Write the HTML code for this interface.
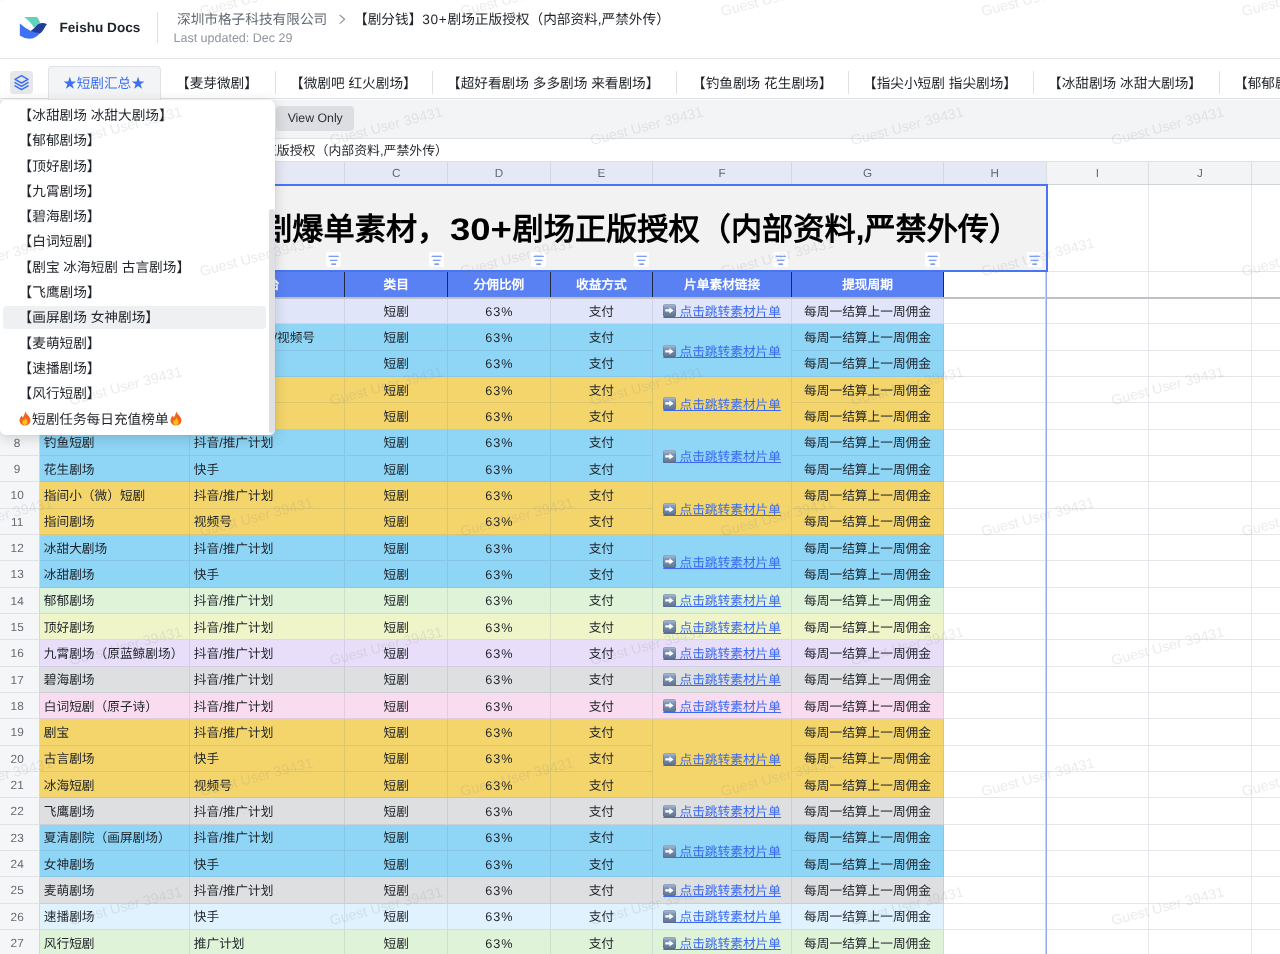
<!DOCTYPE html>
<html lang="zh-CN"><head><meta charset="utf-8"><title>Feishu Docs</title>
<style>
*{box-sizing:border-box;margin:0;padding:0}
html,body{width:1280px;height:954px;overflow:hidden;background:#fff}
body{font-family:"Liberation Sans",sans-serif;color:#1f2329;position:relative;-webkit-font-smoothing:antialiased;text-rendering:geometricPrecision}
.abs{position:absolute}
.nw{white-space:nowrap}
/* header */
#hdr{left:0;top:0;width:1280px;height:58.6px;background:#fff;border-bottom:1.5px solid #e4e5e7}
#brand{left:59.5px;top:19px;font-weight:700;font-size:13.6px;line-height:18px;color:#1f2329;letter-spacing:0}
#vdiv{left:157px;top:12px;width:1px;height:31px;background:#dee0e3}
#crumb1{left:177px;top:9.5px;font-size:13.67px;line-height:20px;color:#646a73}
#crumbgt{left:338.5px;top:9.5px;font-size:13px;line-height:20px;color:#8f959e}
#crumb2{left:354px;top:9.5px;font-size:13.67px;line-height:20px;color:#1f2329}
#upd{left:173.5px;top:31px;font-size:12.5px;line-height:15px;color:#8f959e;letter-spacing:0}
/* tabs */
#tabs{left:0;top:59px;width:1280px;height:40px;background:#fff;border-bottom:1px solid #dee0e3}
#layer{left:9.6px;top:71px;width:23.4px;height:23px;border-radius:4px;background:#e6e7e9}
#tabA{left:48px;top:66px;width:113px;height:33.5px;background:#f3f4f6;border:1px solid #e0e2e5;border-bottom:none;border-radius:4px 4px 0 0}
.tab{top:73px;font-size:13.67px;line-height:22px;color:#1f2329}
.tsep{top:71px;width:1px;height:23px;background:#dee0e3}
/* toolbar */
#tool{left:0;top:99.5px;width:1280px;height:39px;background:#f3f4f6;border-bottom:1px solid #dee0e3}
#vo{left:276px;top:106.4px;width:78.4px;height:25px;border-radius:4px;background:#dcdee1;font-size:12.3px;line-height:25.6px;text-align:center;color:#2b2f36}
#fx{left:0;top:138.5px;width:1280px;height:24px;background:#fff;border-bottom:1px solid #dee0e3}
#fxt{right:832px;top:141.7px;font-size:12.9px;line-height:18px;color:#1f2329}
/* col header */
.ch{top:162.5px;height:21.5px;background:#f3f4f6;border-right:1px solid #dcdee2;border-bottom:1px solid #d0d3d6;font-size:11.7px;line-height:21px;text-align:center;color:#646a73}
.ch.sel{background:#e2e7f5;border-right-color:#ced5e8;border-bottom:none}
/* rows */
.rn{left:0;width:39.9px;background:#f5f6f8;border-right:1px solid #d5d7db;border-bottom:1px solid #e0e2e5;font-size:11.8px;color:#646a73;text-align:center;padding-right:4.6px;padding-top:.1px;overflow:hidden}
.c{font-size:12.7px;color:#1f2329;border-right:1px solid rgba(90,105,125,.14);border-bottom:1px solid rgba(90,105,125,.14);overflow:hidden}
.c.l{padding-left:3.9px;text-align:left}
.c.m{text-align:center}
.h2{background:#5a81f3;color:#fff;font-weight:700;font-size:12.7px;text-align:center;border-right:1.5px solid #1f2a44;border-bottom:none}
.lk{color:#3b6af0;text-decoration:underline;text-decoration-thickness:.85px;text-underline-offset:.9px;text-decoration-skip-ink:none}
.ew{position:relative}
.em{position:absolute;left:.2px;top:-.2px;width:12.5px;height:12.5px;border-radius:2.6px;background:linear-gradient(#aebfd6,#7c92b0 35%,#5f7492);box-shadow:inset 0 0 0 .5px rgba(60,80,110,.35)}
.gl{background:#e5e6e9}
.wm{font-size:17px;color:#000;opacity:.07;transform:rotate(-15deg);transform-origin:left top;white-space:nowrap;pointer-events:none;letter-spacing:.2px}
/* dropdown */
#dd{left:0;top:99.5px;width:275.4px;height:335.5px;background:#fff;border-radius:5px;box-shadow:0 3px 14px rgba(31,35,41,.18),0 0 1px rgba(31,35,41,.25)}
.di{left:18.6px;font-size:13.67px;line-height:25.3px;height:25.3px;color:#1f2329}
#dhl{left:3px;top:305.7px;width:263px;height:23.8px;border-radius:4px;background:#eff0f1}
#dsb{left:269.2px;top:209px;width:5.8px;height:224px;border-radius:3px;background:#dfe0e3}
</style></head><body>
<div id="app" class="abs" style="left:0;top:0;width:1280px;height:954px;will-change:transform">

<div id="hdr" class="abs"></div>
<svg class="abs" style="left:10px;top:8px" width="48" height="40" viewBox="0 0 48 40">
<path d="M9.85 15.5 V27.5 Q14 30.6 19.3 30.8 Q23 30.9 26.5 28.6 Q30.5 26 33.5 21 Q35.2 17.8 36.9 16.35 L30 20 L20.96 23 Q14.7 19.9 9.85 15.5 Z" fill="#3f70f6"/>
<path d="M14.05 9 L26.4 9 Q27.3 9 27.8 9.9 Q29.4 12.4 30.2 14.7 Q26.8 17.2 24.1 20.1 Q20.5 13.3 14.05 9 Z" fill="#5fd3bb"/>
<path d="M20.96 22.85 Q24.5 20.5 27.25 16.8 Q29.5 15.3 31.9 15.1 Q34.8 14.9 36.9 16.35 Q35.3 18 34.4 20.1 Q32.8 23.2 30.6 24.95 Q26 25.4 20.96 22.85 Z" fill="#213c9b"/>
</svg>
<div id="brand" class="abs nw">Feishu Docs</div>
<div id="vdiv" class="abs"></div>
<div id="crumb1" class="abs nw">深圳市格子科技有限公司</div>
<svg class="abs" style="left:336px;top:12px" width="14" height="14" viewBox="0 0 14 14" fill="none" stroke="#8f959e" stroke-width="1.15" stroke-linecap="round" stroke-linejoin="round"><path d="M4 3.2 L8.6 7.3 L4 11.4"/></svg>
<div id="crumb2" class="abs nw">【剧分钱】<span style="letter-spacing:.7px">30+</span>剧场正版授权（内部资料,严禁外传）</div>
<div id="upd" class="abs nw">Last updated: Dec 29</div>
<div id="tabs" class="abs"></div>
<div id="layer" class="abs"><svg width="23" height="23" viewBox="0 0 23 23" fill="none" stroke="#3b6df2" stroke-width="1.5" stroke-linejoin="round" stroke-linecap="round"><path d="M11.5 4.6 L18 8.3 L11.5 12 L5 8.3 Z"/><path d="M5 11.6 L11.5 15.3 L18 11.6"/><path d="M5 14.9 L11.5 18.6 L18 14.9"/></svg></div>
<div id="tabA" class="abs"></div>
<div class="abs tab nw" style="left:63px;color:#3e6ff2">★短剧汇总★</div>
<div class="abs tab nw" style="left:176px">【麦芽微剧】</div>
<div class="abs tab nw" style="left:290px">【微剧吧 红火剧场】</div>
<div class="abs tab nw" style="left:447px">【超好看剧场 多多剧场 来看剧场】</div>
<div class="abs tab nw" style="left:692px">【钓鱼剧场 花生剧场】</div>
<div class="abs tab nw" style="left:863px">【指尖小短剧 指尖剧场】</div>
<div class="abs tab nw" style="left:1048px">【冰甜剧场 冰甜大剧场】</div>
<div class="abs tab nw" style="left:1234px">【郁郁剧场】</div>
<div class="abs tsep" style="left:274.5px"></div>
<div class="abs tsep" style="left:432px"></div>
<div class="abs tsep" style="left:676px"></div>
<div class="abs tsep" style="left:848px"></div>
<div class="abs tsep" style="left:1033px"></div>
<div class="abs tsep" style="left:1218.5px"></div>
<div id="tool" class="abs"></div>
<div id="vo" class="abs nw">View Only</div>
<div id="fx" class="abs"></div>
<div id="fxt" class="abs nw">【剧分钱】短剧爆单素材，30+剧场正版授权（内部资料,严禁外传）</div>
<div class="abs" style="left:0;top:161px;width:1280px;height:24.2px;background:#f3f4f6;border-top:1px solid #e1e3e6;border-bottom:1.2px solid #cfd2d6"></div>
<div class="abs" style="left:0;top:161px;width:1046.2px;height:23.2px;background:#e5e9f6;border-top:1px solid #dbe0ed"></div>
<div class="abs" style="left:39px;top:161px;width:1px;height:23.2px;background:#d3d7e3"></div>
<div class="abs nw" style="left:39.9px;top:162px;width:150px;height:22.2px;border-right:1px solid #d0d6e8;font-size:11.7px;line-height:24.2px;text-align:center;color:#646a73">A</div>
<div class="abs nw" style="left:189.9px;top:162px;width:155.2px;height:22.2px;border-right:1px solid #d0d6e8;font-size:11.7px;line-height:24.2px;text-align:center;color:#646a73">B</div>
<div class="abs nw" style="left:345.1px;top:162px;width:103.1px;height:22.2px;border-right:1px solid #d0d6e8;font-size:11.7px;line-height:24.2px;text-align:center;color:#646a73">C</div>
<div class="abs nw" style="left:448.2px;top:162px;width:102.5px;height:22.2px;border-right:1px solid #d0d6e8;font-size:11.7px;line-height:24.2px;text-align:center;color:#646a73">D</div>
<div class="abs nw" style="left:550.7px;top:162px;width:102.4px;height:22.2px;border-right:1px solid #d0d6e8;font-size:11.7px;line-height:24.2px;text-align:center;color:#646a73">E</div>
<div class="abs nw" style="left:653.1px;top:162px;width:139.1px;height:22.2px;border-right:1px solid #d0d6e8;font-size:11.7px;line-height:24.2px;text-align:center;color:#646a73">F</div>
<div class="abs nw" style="left:792.2px;top:162px;width:151.7px;height:22.2px;border-right:1px solid #d0d6e8;font-size:11.7px;line-height:24.2px;text-align:center;color:#646a73">G</div>
<div class="abs nw" style="left:943.9px;top:162px;width:102.8px;height:22.2px;border-right:1px solid #dcdee2;font-size:11.7px;line-height:24.2px;text-align:center;color:#646a73">H</div>
<div class="abs nw" style="left:1046.7px;top:162px;width:102.3px;height:22.2px;border-right:1px solid #dcdee2;font-size:11.7px;line-height:24.2px;text-align:center;color:#646a73">I</div>
<div class="abs nw" style="left:1149px;top:162px;width:102.8px;height:22.2px;border-right:1px solid #dcdee2;font-size:11.7px;line-height:24.2px;text-align:center;color:#646a73">J</div>
<div class="abs nw" style="left:1251.8px;top:162px;width:102.6px;height:22.2px;border-right:1px solid #dcdee2;font-size:11.7px;line-height:24.2px;text-align:center;color:#646a73">K</div>
<div class="abs rn" style="top:185px;height:86.52px;line-height:87.12px">1</div>
<div class="abs rn" style="top:271.52px;height:26.34px;line-height:26.94px">2</div>
<div class="abs rn" style="top:297.86px;height:26.34px;line-height:26.94px">3</div>
<div class="abs rn" style="top:324.2px;height:26.34px;line-height:26.94px">4</div>
<div class="abs rn" style="top:350.54px;height:26.34px;line-height:26.94px">5</div>
<div class="abs rn" style="top:376.88px;height:26.34px;line-height:26.94px">6</div>
<div class="abs rn" style="top:403.22px;height:26.34px;line-height:26.94px">7</div>
<div class="abs rn" style="top:429.56px;height:26.34px;line-height:26.94px">8</div>
<div class="abs rn" style="top:455.9px;height:26.34px;line-height:26.94px">9</div>
<div class="abs rn" style="top:482.24px;height:26.34px;line-height:26.94px">10</div>
<div class="abs rn" style="top:508.58px;height:26.34px;line-height:26.94px">11</div>
<div class="abs rn" style="top:534.92px;height:26.34px;line-height:26.94px">12</div>
<div class="abs rn" style="top:561.26px;height:26.34px;line-height:26.94px">13</div>
<div class="abs rn" style="top:587.6px;height:26.34px;line-height:26.94px">14</div>
<div class="abs rn" style="top:613.94px;height:26.34px;line-height:26.94px">15</div>
<div class="abs rn" style="top:640.28px;height:26.34px;line-height:26.94px">16</div>
<div class="abs rn" style="top:666.62px;height:26.34px;line-height:26.94px">17</div>
<div class="abs rn" style="top:692.96px;height:26.34px;line-height:26.94px">18</div>
<div class="abs rn" style="top:719.3px;height:26.34px;line-height:26.94px">19</div>
<div class="abs rn" style="top:745.64px;height:26.34px;line-height:26.94px">20</div>
<div class="abs rn" style="top:771.98px;height:26.34px;line-height:26.94px">21</div>
<div class="abs rn" style="top:798.32px;height:26.34px;line-height:26.94px">22</div>
<div class="abs rn" style="top:824.66px;height:26.34px;line-height:26.94px">23</div>
<div class="abs rn" style="top:851px;height:26.34px;line-height:26.94px">24</div>
<div class="abs rn" style="top:877.34px;height:26.34px;line-height:26.94px">25</div>
<div class="abs rn" style="top:903.68px;height:26.34px;line-height:26.94px">26</div>
<div class="abs rn" style="top:930.02px;height:26.34px;line-height:26.94px">27</div>
<div class="abs gl" style="left:943.9px;top:270.52px;width:336.1px;height:1px"></div>
<div class="abs gl" style="left:943.9px;top:296.86px;width:336.1px;height:1px"></div>
<div class="abs gl" style="left:943.9px;top:323.2px;width:336.1px;height:1px"></div>
<div class="abs gl" style="left:943.9px;top:349.54px;width:336.1px;height:1px"></div>
<div class="abs gl" style="left:943.9px;top:375.88px;width:336.1px;height:1px"></div>
<div class="abs gl" style="left:943.9px;top:402.22px;width:336.1px;height:1px"></div>
<div class="abs gl" style="left:943.9px;top:428.56px;width:336.1px;height:1px"></div>
<div class="abs gl" style="left:943.9px;top:454.9px;width:336.1px;height:1px"></div>
<div class="abs gl" style="left:943.9px;top:481.24px;width:336.1px;height:1px"></div>
<div class="abs gl" style="left:943.9px;top:507.58px;width:336.1px;height:1px"></div>
<div class="abs gl" style="left:943.9px;top:533.92px;width:336.1px;height:1px"></div>
<div class="abs gl" style="left:943.9px;top:560.26px;width:336.1px;height:1px"></div>
<div class="abs gl" style="left:943.9px;top:586.6px;width:336.1px;height:1px"></div>
<div class="abs gl" style="left:943.9px;top:612.94px;width:336.1px;height:1px"></div>
<div class="abs gl" style="left:943.9px;top:639.28px;width:336.1px;height:1px"></div>
<div class="abs gl" style="left:943.9px;top:665.62px;width:336.1px;height:1px"></div>
<div class="abs gl" style="left:943.9px;top:691.96px;width:336.1px;height:1px"></div>
<div class="abs gl" style="left:943.9px;top:718.3px;width:336.1px;height:1px"></div>
<div class="abs gl" style="left:943.9px;top:744.64px;width:336.1px;height:1px"></div>
<div class="abs gl" style="left:943.9px;top:770.98px;width:336.1px;height:1px"></div>
<div class="abs gl" style="left:943.9px;top:797.32px;width:336.1px;height:1px"></div>
<div class="abs gl" style="left:943.9px;top:823.66px;width:336.1px;height:1px"></div>
<div class="abs gl" style="left:943.9px;top:850px;width:336.1px;height:1px"></div>
<div class="abs gl" style="left:943.9px;top:876.34px;width:336.1px;height:1px"></div>
<div class="abs gl" style="left:943.9px;top:902.68px;width:336.1px;height:1px"></div>
<div class="abs gl" style="left:943.9px;top:929.02px;width:336.1px;height:1px"></div>
<div class="abs gl" style="left:943.9px;top:955.36px;width:336.1px;height:1px"></div>
<div class="abs gl" style="left:1045.7px;top:185px;width:1px;height:769px"></div>
<div class="abs gl" style="left:1148px;top:185px;width:1px;height:769px"></div>
<div class="abs gl" style="left:1250.8px;top:185px;width:1px;height:769px"></div>
<div class="abs" style="left:39.9px;top:185px;width:1006.8px;height:86.52px;background:#f2f2f2"></div>
<div id="ttl" class="abs nw" style="left:74px;top:210px;font-size:31.2px;line-height:40px;font-weight:700;color:#000">【剧分钱】短剧爆单素材，<span style="display:inline-block;transform:scaleX(1.17);transform-origin:left center;margin-left:1.5px;margin-right:9.9px">30+</span>剧场正版授权（内部资料,严禁外传）</div>
<div class="abs" style="left:325.7px;top:251.5px;width:15px;height:15px;border-radius:2px;background:#fff"><svg class="abs" style="left:0;top:0" width="15" height="15" viewBox="0 0 15 15" stroke="#5580f5" stroke-width="1.05" stroke-linecap="round" fill="none"><path d="M3 4.2 H12.4 M4.4 8.3 H11 M5.7 12.1 H9.7"/></svg></div>
<div class="abs" style="left:428.8px;top:251.5px;width:15px;height:15px;border-radius:2px;background:#fff"><svg class="abs" style="left:0;top:0" width="15" height="15" viewBox="0 0 15 15" stroke="#5580f5" stroke-width="1.05" stroke-linecap="round" fill="none"><path d="M3 4.2 H12.4 M4.4 8.3 H11 M5.7 12.1 H9.7"/></svg></div>
<div class="abs" style="left:531.3px;top:251.5px;width:15px;height:15px;border-radius:2px;background:#fff"><svg class="abs" style="left:0;top:0" width="15" height="15" viewBox="0 0 15 15" stroke="#5580f5" stroke-width="1.05" stroke-linecap="round" fill="none"><path d="M3 4.2 H12.4 M4.4 8.3 H11 M5.7 12.1 H9.7"/></svg></div>
<div class="abs" style="left:633.7px;top:251.5px;width:15px;height:15px;border-radius:2px;background:#fff"><svg class="abs" style="left:0;top:0" width="15" height="15" viewBox="0 0 15 15" stroke="#5580f5" stroke-width="1.05" stroke-linecap="round" fill="none"><path d="M3 4.2 H12.4 M4.4 8.3 H11 M5.7 12.1 H9.7"/></svg></div>
<div class="abs" style="left:772.8px;top:251.5px;width:15px;height:15px;border-radius:2px;background:#fff"><svg class="abs" style="left:0;top:0" width="15" height="15" viewBox="0 0 15 15" stroke="#5580f5" stroke-width="1.05" stroke-linecap="round" fill="none"><path d="M3 4.2 H12.4 M4.4 8.3 H11 M5.7 12.1 H9.7"/></svg></div>
<div class="abs" style="left:924.5px;top:251.5px;width:15px;height:15px;border-radius:2px;background:#fff"><svg class="abs" style="left:0;top:0" width="15" height="15" viewBox="0 0 15 15" stroke="#5580f5" stroke-width="1.05" stroke-linecap="round" fill="none"><path d="M3 4.2 H12.4 M4.4 8.3 H11 M5.7 12.1 H9.7"/></svg></div>
<div class="abs" style="left:1027.3px;top:251.5px;width:15px;height:15px;border-radius:2px;background:#fff"><svg class="abs" style="left:0;top:0" width="15" height="15" viewBox="0 0 15 15" stroke="#5580f5" stroke-width="1.05" stroke-linecap="round" fill="none"><path d="M3 4.2 H12.4 M4.4 8.3 H11 M5.7 12.1 H9.7"/></svg></div>
<div class="abs c h2 nw" style="left:39.9px;top:271.52px;width:150px;height:26.34px;line-height:26.34px;padding-top:.6px">剧场</div>
<div class="abs c h2 nw" style="left:189.9px;top:271.52px;width:155.2px;height:26.34px;line-height:26.34px;padding-top:.6px">平台</div>
<div class="abs c h2 nw" style="left:345.1px;top:271.52px;width:103.1px;height:26.34px;line-height:26.34px;padding-top:.6px">类目</div>
<div class="abs c h2 nw" style="left:448.2px;top:271.52px;width:102.5px;height:26.34px;line-height:26.34px;padding-top:.6px">分佣比例</div>
<div class="abs c h2 nw" style="left:550.7px;top:271.52px;width:102.4px;height:26.34px;line-height:26.34px;padding-top:.6px">收益方式</div>
<div class="abs c h2 nw" style="left:653.1px;top:271.52px;width:139.1px;height:26.34px;line-height:26.34px;padding-top:.6px">片单素材链接</div>
<div class="abs c h2 nw" style="left:792.2px;top:271.52px;width:151.7px;height:26.34px;line-height:26.34px;padding-top:.6px">提现周期</div>
<div class="abs c l nw" style="left:39.9px;top:297.86px;width:150px;height:26.34px;line-height:25.84px;padding-top:1.7px;background:#e0e5fa">麦芽微剧</div>
<div class="abs c l nw" style="left:189.9px;top:297.86px;width:155.2px;height:26.34px;line-height:25.84px;padding-top:1.7px;background:#e0e5fa">抖音/推广计划</div>
<div class="abs c m nw" style="left:345.1px;top:297.86px;width:103.1px;height:26.34px;line-height:25.84px;padding-top:1.7px;background:#e0e5fa">短剧</div>
<div class="abs c m nw" style="left:448.2px;top:297.86px;width:102.5px;height:26.34px;line-height:25.84px;padding-top:1.7px;background:#e0e5fa"><span style="letter-spacing:.9px;margin-left:.9px">63%</span></div>
<div class="abs c m nw" style="left:550.7px;top:297.86px;width:102.4px;height:26.34px;line-height:25.84px;padding-top:1.7px;background:#e0e5fa">支付</div>
<div class="abs c m nw" style="left:792.2px;top:297.86px;width:151.7px;height:26.34px;line-height:25.84px;padding-top:1.7px;background:#e0e5fa">每周一结算上一周佣金</div>
<div class="abs c l nw" style="left:39.9px;top:324.2px;width:150px;height:26.34px;line-height:25.84px;padding-top:1.7px;background:#8ed5f6">微剧吧</div>
<div class="abs c l nw" style="left:189.9px;top:324.2px;width:155.2px;height:26.34px;line-height:25.84px;padding-top:1.7px;background:#8ed5f6">抖音/推广计划/视频号</div>
<div class="abs c m nw" style="left:345.1px;top:324.2px;width:103.1px;height:26.34px;line-height:25.84px;padding-top:1.7px;background:#8ed5f6">短剧</div>
<div class="abs c m nw" style="left:448.2px;top:324.2px;width:102.5px;height:26.34px;line-height:25.84px;padding-top:1.7px;background:#8ed5f6"><span style="letter-spacing:.9px;margin-left:.9px">63%</span></div>
<div class="abs c m nw" style="left:550.7px;top:324.2px;width:102.4px;height:26.34px;line-height:25.84px;padding-top:1.7px;background:#8ed5f6">支付</div>
<div class="abs c m nw" style="left:792.2px;top:324.2px;width:151.7px;height:26.34px;line-height:25.84px;padding-top:1.7px;background:#8ed5f6">每周一结算上一周佣金</div>
<div class="abs c l nw" style="left:39.9px;top:350.54px;width:150px;height:26.34px;line-height:25.84px;padding-top:1.7px;background:#8ed5f6">红火剧场</div>
<div class="abs c l nw" style="left:189.9px;top:350.54px;width:155.2px;height:26.34px;line-height:25.84px;padding-top:1.7px;background:#8ed5f6">快手</div>
<div class="abs c m nw" style="left:345.1px;top:350.54px;width:103.1px;height:26.34px;line-height:25.84px;padding-top:1.7px;background:#8ed5f6">短剧</div>
<div class="abs c m nw" style="left:448.2px;top:350.54px;width:102.5px;height:26.34px;line-height:25.84px;padding-top:1.7px;background:#8ed5f6"><span style="letter-spacing:.9px;margin-left:.9px">63%</span></div>
<div class="abs c m nw" style="left:550.7px;top:350.54px;width:102.4px;height:26.34px;line-height:25.84px;padding-top:1.7px;background:#8ed5f6">支付</div>
<div class="abs c m nw" style="left:792.2px;top:350.54px;width:151.7px;height:26.34px;line-height:25.84px;padding-top:1.7px;background:#8ed5f6">每周一结算上一周佣金</div>
<div class="abs c l nw" style="left:39.9px;top:376.88px;width:150px;height:26.34px;line-height:25.84px;padding-top:1.7px;background:#f3d56b">超好看剧场</div>
<div class="abs c l nw" style="left:189.9px;top:376.88px;width:155.2px;height:26.34px;line-height:25.84px;padding-top:1.7px;background:#f3d56b">抖音/推广计划</div>
<div class="abs c m nw" style="left:345.1px;top:376.88px;width:103.1px;height:26.34px;line-height:25.84px;padding-top:1.7px;background:#f3d56b">短剧</div>
<div class="abs c m nw" style="left:448.2px;top:376.88px;width:102.5px;height:26.34px;line-height:25.84px;padding-top:1.7px;background:#f3d56b"><span style="letter-spacing:.9px;margin-left:.9px">63%</span></div>
<div class="abs c m nw" style="left:550.7px;top:376.88px;width:102.4px;height:26.34px;line-height:25.84px;padding-top:1.7px;background:#f3d56b">支付</div>
<div class="abs c m nw" style="left:792.2px;top:376.88px;width:151.7px;height:26.34px;line-height:25.84px;padding-top:1.7px;background:#f3d56b">每周一结算上一周佣金</div>
<div class="abs c l nw" style="left:39.9px;top:403.22px;width:150px;height:26.34px;line-height:25.84px;padding-top:1.7px;background:#f3d56b">多多剧场</div>
<div class="abs c l nw" style="left:189.9px;top:403.22px;width:155.2px;height:26.34px;line-height:25.84px;padding-top:1.7px;background:#f3d56b">快手</div>
<div class="abs c m nw" style="left:345.1px;top:403.22px;width:103.1px;height:26.34px;line-height:25.84px;padding-top:1.7px;background:#f3d56b">短剧</div>
<div class="abs c m nw" style="left:448.2px;top:403.22px;width:102.5px;height:26.34px;line-height:25.84px;padding-top:1.7px;background:#f3d56b"><span style="letter-spacing:.9px;margin-left:.9px">63%</span></div>
<div class="abs c m nw" style="left:550.7px;top:403.22px;width:102.4px;height:26.34px;line-height:25.84px;padding-top:1.7px;background:#f3d56b">支付</div>
<div class="abs c m nw" style="left:792.2px;top:403.22px;width:151.7px;height:26.34px;line-height:25.84px;padding-top:1.7px;background:#f3d56b">每周一结算上一周佣金</div>
<div class="abs c l nw" style="left:39.9px;top:429.56px;width:150px;height:26.34px;line-height:25.84px;padding-top:1.7px;background:#8ed5f6">钓鱼短剧</div>
<div class="abs c l nw" style="left:189.9px;top:429.56px;width:155.2px;height:26.34px;line-height:25.84px;padding-top:1.7px;background:#8ed5f6">抖音/推广计划</div>
<div class="abs c m nw" style="left:345.1px;top:429.56px;width:103.1px;height:26.34px;line-height:25.84px;padding-top:1.7px;background:#8ed5f6">短剧</div>
<div class="abs c m nw" style="left:448.2px;top:429.56px;width:102.5px;height:26.34px;line-height:25.84px;padding-top:1.7px;background:#8ed5f6"><span style="letter-spacing:.9px;margin-left:.9px">63%</span></div>
<div class="abs c m nw" style="left:550.7px;top:429.56px;width:102.4px;height:26.34px;line-height:25.84px;padding-top:1.7px;background:#8ed5f6">支付</div>
<div class="abs c m nw" style="left:792.2px;top:429.56px;width:151.7px;height:26.34px;line-height:25.84px;padding-top:1.7px;background:#8ed5f6">每周一结算上一周佣金</div>
<div class="abs c l nw" style="left:39.9px;top:455.9px;width:150px;height:26.34px;line-height:25.84px;padding-top:1.7px;background:#8ed5f6">花生剧场</div>
<div class="abs c l nw" style="left:189.9px;top:455.9px;width:155.2px;height:26.34px;line-height:25.84px;padding-top:1.7px;background:#8ed5f6">快手</div>
<div class="abs c m nw" style="left:345.1px;top:455.9px;width:103.1px;height:26.34px;line-height:25.84px;padding-top:1.7px;background:#8ed5f6">短剧</div>
<div class="abs c m nw" style="left:448.2px;top:455.9px;width:102.5px;height:26.34px;line-height:25.84px;padding-top:1.7px;background:#8ed5f6"><span style="letter-spacing:.9px;margin-left:.9px">63%</span></div>
<div class="abs c m nw" style="left:550.7px;top:455.9px;width:102.4px;height:26.34px;line-height:25.84px;padding-top:1.7px;background:#8ed5f6">支付</div>
<div class="abs c m nw" style="left:792.2px;top:455.9px;width:151.7px;height:26.34px;line-height:25.84px;padding-top:1.7px;background:#8ed5f6">每周一结算上一周佣金</div>
<div class="abs c l nw" style="left:39.9px;top:482.24px;width:150px;height:26.34px;line-height:25.84px;padding-top:1.7px;background:#f3d56b">指间小（微）短剧</div>
<div class="abs c l nw" style="left:189.9px;top:482.24px;width:155.2px;height:26.34px;line-height:25.84px;padding-top:1.7px;background:#f3d56b">抖音/推广计划</div>
<div class="abs c m nw" style="left:345.1px;top:482.24px;width:103.1px;height:26.34px;line-height:25.84px;padding-top:1.7px;background:#f3d56b">短剧</div>
<div class="abs c m nw" style="left:448.2px;top:482.24px;width:102.5px;height:26.34px;line-height:25.84px;padding-top:1.7px;background:#f3d56b"><span style="letter-spacing:.9px;margin-left:.9px">63%</span></div>
<div class="abs c m nw" style="left:550.7px;top:482.24px;width:102.4px;height:26.34px;line-height:25.84px;padding-top:1.7px;background:#f3d56b">支付</div>
<div class="abs c m nw" style="left:792.2px;top:482.24px;width:151.7px;height:26.34px;line-height:25.84px;padding-top:1.7px;background:#f3d56b">每周一结算上一周佣金</div>
<div class="abs c l nw" style="left:39.9px;top:508.58px;width:150px;height:26.34px;line-height:25.84px;padding-top:1.7px;background:#f3d56b">指间剧场</div>
<div class="abs c l nw" style="left:189.9px;top:508.58px;width:155.2px;height:26.34px;line-height:25.84px;padding-top:1.7px;background:#f3d56b">视频号</div>
<div class="abs c m nw" style="left:345.1px;top:508.58px;width:103.1px;height:26.34px;line-height:25.84px;padding-top:1.7px;background:#f3d56b">短剧</div>
<div class="abs c m nw" style="left:448.2px;top:508.58px;width:102.5px;height:26.34px;line-height:25.84px;padding-top:1.7px;background:#f3d56b"><span style="letter-spacing:.9px;margin-left:.9px">63%</span></div>
<div class="abs c m nw" style="left:550.7px;top:508.58px;width:102.4px;height:26.34px;line-height:25.84px;padding-top:1.7px;background:#f3d56b">支付</div>
<div class="abs c m nw" style="left:792.2px;top:508.58px;width:151.7px;height:26.34px;line-height:25.84px;padding-top:1.7px;background:#f3d56b">每周一结算上一周佣金</div>
<div class="abs c l nw" style="left:39.9px;top:534.92px;width:150px;height:26.34px;line-height:25.84px;padding-top:1.7px;background:#8ed5f6">冰甜大剧场</div>
<div class="abs c l nw" style="left:189.9px;top:534.92px;width:155.2px;height:26.34px;line-height:25.84px;padding-top:1.7px;background:#8ed5f6">抖音/推广计划</div>
<div class="abs c m nw" style="left:345.1px;top:534.92px;width:103.1px;height:26.34px;line-height:25.84px;padding-top:1.7px;background:#8ed5f6">短剧</div>
<div class="abs c m nw" style="left:448.2px;top:534.92px;width:102.5px;height:26.34px;line-height:25.84px;padding-top:1.7px;background:#8ed5f6"><span style="letter-spacing:.9px;margin-left:.9px">63%</span></div>
<div class="abs c m nw" style="left:550.7px;top:534.92px;width:102.4px;height:26.34px;line-height:25.84px;padding-top:1.7px;background:#8ed5f6">支付</div>
<div class="abs c m nw" style="left:792.2px;top:534.92px;width:151.7px;height:26.34px;line-height:25.84px;padding-top:1.7px;background:#8ed5f6">每周一结算上一周佣金</div>
<div class="abs c l nw" style="left:39.9px;top:561.26px;width:150px;height:26.34px;line-height:25.84px;padding-top:1.7px;background:#8ed5f6">冰甜剧场</div>
<div class="abs c l nw" style="left:189.9px;top:561.26px;width:155.2px;height:26.34px;line-height:25.84px;padding-top:1.7px;background:#8ed5f6">快手</div>
<div class="abs c m nw" style="left:345.1px;top:561.26px;width:103.1px;height:26.34px;line-height:25.84px;padding-top:1.7px;background:#8ed5f6">短剧</div>
<div class="abs c m nw" style="left:448.2px;top:561.26px;width:102.5px;height:26.34px;line-height:25.84px;padding-top:1.7px;background:#8ed5f6"><span style="letter-spacing:.9px;margin-left:.9px">63%</span></div>
<div class="abs c m nw" style="left:550.7px;top:561.26px;width:102.4px;height:26.34px;line-height:25.84px;padding-top:1.7px;background:#8ed5f6">支付</div>
<div class="abs c m nw" style="left:792.2px;top:561.26px;width:151.7px;height:26.34px;line-height:25.84px;padding-top:1.7px;background:#8ed5f6">每周一结算上一周佣金</div>
<div class="abs c l nw" style="left:39.9px;top:587.6px;width:150px;height:26.34px;line-height:25.84px;padding-top:1.7px;background:#dff3d9">郁郁剧场</div>
<div class="abs c l nw" style="left:189.9px;top:587.6px;width:155.2px;height:26.34px;line-height:25.84px;padding-top:1.7px;background:#dff3d9">抖音/推广计划</div>
<div class="abs c m nw" style="left:345.1px;top:587.6px;width:103.1px;height:26.34px;line-height:25.84px;padding-top:1.7px;background:#dff3d9">短剧</div>
<div class="abs c m nw" style="left:448.2px;top:587.6px;width:102.5px;height:26.34px;line-height:25.84px;padding-top:1.7px;background:#dff3d9"><span style="letter-spacing:.9px;margin-left:.9px">63%</span></div>
<div class="abs c m nw" style="left:550.7px;top:587.6px;width:102.4px;height:26.34px;line-height:25.84px;padding-top:1.7px;background:#dff3d9">支付</div>
<div class="abs c m nw" style="left:792.2px;top:587.6px;width:151.7px;height:26.34px;line-height:25.84px;padding-top:1.7px;background:#dff3d9">每周一结算上一周佣金</div>
<div class="abs c l nw" style="left:39.9px;top:613.94px;width:150px;height:26.34px;line-height:25.84px;padding-top:1.7px;background:#eff5c9">顶好剧场</div>
<div class="abs c l nw" style="left:189.9px;top:613.94px;width:155.2px;height:26.34px;line-height:25.84px;padding-top:1.7px;background:#eff5c9">抖音/推广计划</div>
<div class="abs c m nw" style="left:345.1px;top:613.94px;width:103.1px;height:26.34px;line-height:25.84px;padding-top:1.7px;background:#eff5c9">短剧</div>
<div class="abs c m nw" style="left:448.2px;top:613.94px;width:102.5px;height:26.34px;line-height:25.84px;padding-top:1.7px;background:#eff5c9"><span style="letter-spacing:.9px;margin-left:.9px">63%</span></div>
<div class="abs c m nw" style="left:550.7px;top:613.94px;width:102.4px;height:26.34px;line-height:25.84px;padding-top:1.7px;background:#eff5c9">支付</div>
<div class="abs c m nw" style="left:792.2px;top:613.94px;width:151.7px;height:26.34px;line-height:25.84px;padding-top:1.7px;background:#eff5c9">每周一结算上一周佣金</div>
<div class="abs c l nw" style="left:39.9px;top:640.28px;width:150px;height:26.34px;line-height:25.84px;padding-top:1.7px;background:#e8defa">九霄剧场（原蓝鲸剧场）</div>
<div class="abs c l nw" style="left:189.9px;top:640.28px;width:155.2px;height:26.34px;line-height:25.84px;padding-top:1.7px;background:#e8defa">抖音/推广计划</div>
<div class="abs c m nw" style="left:345.1px;top:640.28px;width:103.1px;height:26.34px;line-height:25.84px;padding-top:1.7px;background:#e8defa">短剧</div>
<div class="abs c m nw" style="left:448.2px;top:640.28px;width:102.5px;height:26.34px;line-height:25.84px;padding-top:1.7px;background:#e8defa"><span style="letter-spacing:.9px;margin-left:.9px">63%</span></div>
<div class="abs c m nw" style="left:550.7px;top:640.28px;width:102.4px;height:26.34px;line-height:25.84px;padding-top:1.7px;background:#e8defa">支付</div>
<div class="abs c m nw" style="left:792.2px;top:640.28px;width:151.7px;height:26.34px;line-height:25.84px;padding-top:1.7px;background:#e8defa">每周一结算上一周佣金</div>
<div class="abs c l nw" style="left:39.9px;top:666.62px;width:150px;height:26.34px;line-height:25.84px;padding-top:1.7px;background:#dedfe1">碧海剧场</div>
<div class="abs c l nw" style="left:189.9px;top:666.62px;width:155.2px;height:26.34px;line-height:25.84px;padding-top:1.7px;background:#dedfe1">抖音/推广计划</div>
<div class="abs c m nw" style="left:345.1px;top:666.62px;width:103.1px;height:26.34px;line-height:25.84px;padding-top:1.7px;background:#dedfe1">短剧</div>
<div class="abs c m nw" style="left:448.2px;top:666.62px;width:102.5px;height:26.34px;line-height:25.84px;padding-top:1.7px;background:#dedfe1"><span style="letter-spacing:.9px;margin-left:.9px">63%</span></div>
<div class="abs c m nw" style="left:550.7px;top:666.62px;width:102.4px;height:26.34px;line-height:25.84px;padding-top:1.7px;background:#dedfe1">支付</div>
<div class="abs c m nw" style="left:792.2px;top:666.62px;width:151.7px;height:26.34px;line-height:25.84px;padding-top:1.7px;background:#dedfe1">每周一结算上一周佣金</div>
<div class="abs c l nw" style="left:39.9px;top:692.96px;width:150px;height:26.34px;line-height:25.84px;padding-top:1.7px;background:#f9dcef">白词短剧（原子诗）</div>
<div class="abs c l nw" style="left:189.9px;top:692.96px;width:155.2px;height:26.34px;line-height:25.84px;padding-top:1.7px;background:#f9dcef">抖音/推广计划</div>
<div class="abs c m nw" style="left:345.1px;top:692.96px;width:103.1px;height:26.34px;line-height:25.84px;padding-top:1.7px;background:#f9dcef">短剧</div>
<div class="abs c m nw" style="left:448.2px;top:692.96px;width:102.5px;height:26.34px;line-height:25.84px;padding-top:1.7px;background:#f9dcef"><span style="letter-spacing:.9px;margin-left:.9px">63%</span></div>
<div class="abs c m nw" style="left:550.7px;top:692.96px;width:102.4px;height:26.34px;line-height:25.84px;padding-top:1.7px;background:#f9dcef">支付</div>
<div class="abs c m nw" style="left:792.2px;top:692.96px;width:151.7px;height:26.34px;line-height:25.84px;padding-top:1.7px;background:#f9dcef">每周一结算上一周佣金</div>
<div class="abs c l nw" style="left:39.9px;top:719.3px;width:150px;height:26.34px;line-height:25.84px;padding-top:1.7px;background:#f3d56b">剧宝</div>
<div class="abs c l nw" style="left:189.9px;top:719.3px;width:155.2px;height:26.34px;line-height:25.84px;padding-top:1.7px;background:#f3d56b">抖音/推广计划</div>
<div class="abs c m nw" style="left:345.1px;top:719.3px;width:103.1px;height:26.34px;line-height:25.84px;padding-top:1.7px;background:#f3d56b">短剧</div>
<div class="abs c m nw" style="left:448.2px;top:719.3px;width:102.5px;height:26.34px;line-height:25.84px;padding-top:1.7px;background:#f3d56b"><span style="letter-spacing:.9px;margin-left:.9px">63%</span></div>
<div class="abs c m nw" style="left:550.7px;top:719.3px;width:102.4px;height:26.34px;line-height:25.84px;padding-top:1.7px;background:#f3d56b">支付</div>
<div class="abs c m nw" style="left:792.2px;top:719.3px;width:151.7px;height:26.34px;line-height:25.84px;padding-top:1.7px;background:#f3d56b">每周一结算上一周佣金</div>
<div class="abs c l nw" style="left:39.9px;top:745.64px;width:150px;height:26.34px;line-height:25.84px;padding-top:1.7px;background:#f3d56b">古言剧场</div>
<div class="abs c l nw" style="left:189.9px;top:745.64px;width:155.2px;height:26.34px;line-height:25.84px;padding-top:1.7px;background:#f3d56b">快手</div>
<div class="abs c m nw" style="left:345.1px;top:745.64px;width:103.1px;height:26.34px;line-height:25.84px;padding-top:1.7px;background:#f3d56b">短剧</div>
<div class="abs c m nw" style="left:448.2px;top:745.64px;width:102.5px;height:26.34px;line-height:25.84px;padding-top:1.7px;background:#f3d56b"><span style="letter-spacing:.9px;margin-left:.9px">63%</span></div>
<div class="abs c m nw" style="left:550.7px;top:745.64px;width:102.4px;height:26.34px;line-height:25.84px;padding-top:1.7px;background:#f3d56b">支付</div>
<div class="abs c m nw" style="left:792.2px;top:745.64px;width:151.7px;height:26.34px;line-height:25.84px;padding-top:1.7px;background:#f3d56b">每周一结算上一周佣金</div>
<div class="abs c l nw" style="left:39.9px;top:771.98px;width:150px;height:26.34px;line-height:25.84px;padding-top:1.7px;background:#f3d56b">冰海短剧</div>
<div class="abs c l nw" style="left:189.9px;top:771.98px;width:155.2px;height:26.34px;line-height:25.84px;padding-top:1.7px;background:#f3d56b">视频号</div>
<div class="abs c m nw" style="left:345.1px;top:771.98px;width:103.1px;height:26.34px;line-height:25.84px;padding-top:1.7px;background:#f3d56b">短剧</div>
<div class="abs c m nw" style="left:448.2px;top:771.98px;width:102.5px;height:26.34px;line-height:25.84px;padding-top:1.7px;background:#f3d56b"><span style="letter-spacing:.9px;margin-left:.9px">63%</span></div>
<div class="abs c m nw" style="left:550.7px;top:771.98px;width:102.4px;height:26.34px;line-height:25.84px;padding-top:1.7px;background:#f3d56b">支付</div>
<div class="abs c m nw" style="left:792.2px;top:771.98px;width:151.7px;height:26.34px;line-height:25.84px;padding-top:1.7px;background:#f3d56b">每周一结算上一周佣金</div>
<div class="abs c l nw" style="left:39.9px;top:798.32px;width:150px;height:26.34px;line-height:25.84px;padding-top:1.7px;background:#dedfe1">飞鹰剧场</div>
<div class="abs c l nw" style="left:189.9px;top:798.32px;width:155.2px;height:26.34px;line-height:25.84px;padding-top:1.7px;background:#dedfe1">抖音/推广计划</div>
<div class="abs c m nw" style="left:345.1px;top:798.32px;width:103.1px;height:26.34px;line-height:25.84px;padding-top:1.7px;background:#dedfe1">短剧</div>
<div class="abs c m nw" style="left:448.2px;top:798.32px;width:102.5px;height:26.34px;line-height:25.84px;padding-top:1.7px;background:#dedfe1"><span style="letter-spacing:.9px;margin-left:.9px">63%</span></div>
<div class="abs c m nw" style="left:550.7px;top:798.32px;width:102.4px;height:26.34px;line-height:25.84px;padding-top:1.7px;background:#dedfe1">支付</div>
<div class="abs c m nw" style="left:792.2px;top:798.32px;width:151.7px;height:26.34px;line-height:25.84px;padding-top:1.7px;background:#dedfe1">每周一结算上一周佣金</div>
<div class="abs c l nw" style="left:39.9px;top:824.66px;width:150px;height:26.34px;line-height:25.84px;padding-top:1.7px;background:#8ed5f6">夏清剧院（画屏剧场）</div>
<div class="abs c l nw" style="left:189.9px;top:824.66px;width:155.2px;height:26.34px;line-height:25.84px;padding-top:1.7px;background:#8ed5f6">抖音/推广计划</div>
<div class="abs c m nw" style="left:345.1px;top:824.66px;width:103.1px;height:26.34px;line-height:25.84px;padding-top:1.7px;background:#8ed5f6">短剧</div>
<div class="abs c m nw" style="left:448.2px;top:824.66px;width:102.5px;height:26.34px;line-height:25.84px;padding-top:1.7px;background:#8ed5f6"><span style="letter-spacing:.9px;margin-left:.9px">63%</span></div>
<div class="abs c m nw" style="left:550.7px;top:824.66px;width:102.4px;height:26.34px;line-height:25.84px;padding-top:1.7px;background:#8ed5f6">支付</div>
<div class="abs c m nw" style="left:792.2px;top:824.66px;width:151.7px;height:26.34px;line-height:25.84px;padding-top:1.7px;background:#8ed5f6">每周一结算上一周佣金</div>
<div class="abs c l nw" style="left:39.9px;top:851px;width:150px;height:26.34px;line-height:25.84px;padding-top:1.7px;background:#8ed5f6">女神剧场</div>
<div class="abs c l nw" style="left:189.9px;top:851px;width:155.2px;height:26.34px;line-height:25.84px;padding-top:1.7px;background:#8ed5f6">快手</div>
<div class="abs c m nw" style="left:345.1px;top:851px;width:103.1px;height:26.34px;line-height:25.84px;padding-top:1.7px;background:#8ed5f6">短剧</div>
<div class="abs c m nw" style="left:448.2px;top:851px;width:102.5px;height:26.34px;line-height:25.84px;padding-top:1.7px;background:#8ed5f6"><span style="letter-spacing:.9px;margin-left:.9px">63%</span></div>
<div class="abs c m nw" style="left:550.7px;top:851px;width:102.4px;height:26.34px;line-height:25.84px;padding-top:1.7px;background:#8ed5f6">支付</div>
<div class="abs c m nw" style="left:792.2px;top:851px;width:151.7px;height:26.34px;line-height:25.84px;padding-top:1.7px;background:#8ed5f6">每周一结算上一周佣金</div>
<div class="abs c l nw" style="left:39.9px;top:877.34px;width:150px;height:26.34px;line-height:25.84px;padding-top:1.7px;background:#dedfe1">麦萌剧场</div>
<div class="abs c l nw" style="left:189.9px;top:877.34px;width:155.2px;height:26.34px;line-height:25.84px;padding-top:1.7px;background:#dedfe1">抖音/推广计划</div>
<div class="abs c m nw" style="left:345.1px;top:877.34px;width:103.1px;height:26.34px;line-height:25.84px;padding-top:1.7px;background:#dedfe1">短剧</div>
<div class="abs c m nw" style="left:448.2px;top:877.34px;width:102.5px;height:26.34px;line-height:25.84px;padding-top:1.7px;background:#dedfe1"><span style="letter-spacing:.9px;margin-left:.9px">63%</span></div>
<div class="abs c m nw" style="left:550.7px;top:877.34px;width:102.4px;height:26.34px;line-height:25.84px;padding-top:1.7px;background:#dedfe1">支付</div>
<div class="abs c m nw" style="left:792.2px;top:877.34px;width:151.7px;height:26.34px;line-height:25.84px;padding-top:1.7px;background:#dedfe1">每周一结算上一周佣金</div>
<div class="abs c l nw" style="left:39.9px;top:903.68px;width:150px;height:26.34px;line-height:25.84px;padding-top:1.7px;background:#dff2fd">速播剧场</div>
<div class="abs c l nw" style="left:189.9px;top:903.68px;width:155.2px;height:26.34px;line-height:25.84px;padding-top:1.7px;background:#dff2fd">快手</div>
<div class="abs c m nw" style="left:345.1px;top:903.68px;width:103.1px;height:26.34px;line-height:25.84px;padding-top:1.7px;background:#dff2fd">短剧</div>
<div class="abs c m nw" style="left:448.2px;top:903.68px;width:102.5px;height:26.34px;line-height:25.84px;padding-top:1.7px;background:#dff2fd"><span style="letter-spacing:.9px;margin-left:.9px">63%</span></div>
<div class="abs c m nw" style="left:550.7px;top:903.68px;width:102.4px;height:26.34px;line-height:25.84px;padding-top:1.7px;background:#dff2fd">支付</div>
<div class="abs c m nw" style="left:792.2px;top:903.68px;width:151.7px;height:26.34px;line-height:25.84px;padding-top:1.7px;background:#dff2fd">每周一结算上一周佣金</div>
<div class="abs c l nw" style="left:39.9px;top:930.02px;width:150px;height:26.34px;line-height:25.84px;padding-top:1.7px;background:#dff3d9">风行短剧</div>
<div class="abs c l nw" style="left:189.9px;top:930.02px;width:155.2px;height:26.34px;line-height:25.84px;padding-top:1.7px;background:#dff3d9">推广计划</div>
<div class="abs c m nw" style="left:345.1px;top:930.02px;width:103.1px;height:26.34px;line-height:25.84px;padding-top:1.7px;background:#dff3d9">短剧</div>
<div class="abs c m nw" style="left:448.2px;top:930.02px;width:102.5px;height:26.34px;line-height:25.84px;padding-top:1.7px;background:#dff3d9"><span style="letter-spacing:.9px;margin-left:.9px">63%</span></div>
<div class="abs c m nw" style="left:550.7px;top:930.02px;width:102.4px;height:26.34px;line-height:25.84px;padding-top:1.7px;background:#dff3d9">支付</div>
<div class="abs c m nw" style="left:792.2px;top:930.02px;width:151.7px;height:26.34px;line-height:25.84px;padding-top:1.7px;background:#dff3d9">每周一结算上一周佣金</div>
<div class="abs c m nw" style="left:653.1px;top:297.86px;width:139.1px;height:26.34px;line-height:25.84px;padding-top:1.7px;background:#e0e5fa"><span class="lk"><span class="ew">&#8195;<span class="em"><svg class="abs" style="left:0;top:0" width="12.5" height="12.5" viewBox="0 0 12.5 12.5"><path d="M2.3 5.2 H6.4 V3.2 L10.6 6.4 L6.4 9.6 V7.6 H2.3 Z" fill="#fff"/></svg></span></span> 点击跳转素材片单</span></div>
<div class="abs c m nw" style="left:653.1px;top:324.2px;width:139.1px;height:52.68px;line-height:52.18px;padding-top:1.7px;background:#8ed5f6"><span class="lk"><span class="ew">&#8195;<span class="em"><svg class="abs" style="left:0;top:0" width="12.5" height="12.5" viewBox="0 0 12.5 12.5"><path d="M2.3 5.2 H6.4 V3.2 L10.6 6.4 L6.4 9.6 V7.6 H2.3 Z" fill="#fff"/></svg></span></span> 点击跳转素材片单</span></div>
<div class="abs c m nw" style="left:653.1px;top:376.88px;width:139.1px;height:52.68px;line-height:52.18px;padding-top:1.7px;background:#f3d56b"><span class="lk"><span class="ew">&#8195;<span class="em"><svg class="abs" style="left:0;top:0" width="12.5" height="12.5" viewBox="0 0 12.5 12.5"><path d="M2.3 5.2 H6.4 V3.2 L10.6 6.4 L6.4 9.6 V7.6 H2.3 Z" fill="#fff"/></svg></span></span> 点击跳转素材片单</span></div>
<div class="abs c m nw" style="left:653.1px;top:429.56px;width:139.1px;height:52.68px;line-height:52.18px;padding-top:1.7px;background:#8ed5f6"><span class="lk"><span class="ew">&#8195;<span class="em"><svg class="abs" style="left:0;top:0" width="12.5" height="12.5" viewBox="0 0 12.5 12.5"><path d="M2.3 5.2 H6.4 V3.2 L10.6 6.4 L6.4 9.6 V7.6 H2.3 Z" fill="#fff"/></svg></span></span> 点击跳转素材片单</span></div>
<div class="abs c m nw" style="left:653.1px;top:482.24px;width:139.1px;height:52.68px;line-height:52.18px;padding-top:1.7px;background:#f3d56b"><span class="lk"><span class="ew">&#8195;<span class="em"><svg class="abs" style="left:0;top:0" width="12.5" height="12.5" viewBox="0 0 12.5 12.5"><path d="M2.3 5.2 H6.4 V3.2 L10.6 6.4 L6.4 9.6 V7.6 H2.3 Z" fill="#fff"/></svg></span></span> 点击跳转素材片单</span></div>
<div class="abs c m nw" style="left:653.1px;top:534.92px;width:139.1px;height:52.68px;line-height:52.18px;padding-top:1.7px;background:#8ed5f6"><span class="lk"><span class="ew">&#8195;<span class="em"><svg class="abs" style="left:0;top:0" width="12.5" height="12.5" viewBox="0 0 12.5 12.5"><path d="M2.3 5.2 H6.4 V3.2 L10.6 6.4 L6.4 9.6 V7.6 H2.3 Z" fill="#fff"/></svg></span></span> 点击跳转素材片单</span></div>
<div class="abs c m nw" style="left:653.1px;top:587.6px;width:139.1px;height:26.34px;line-height:25.84px;padding-top:1.7px;background:#dff3d9"><span class="lk"><span class="ew">&#8195;<span class="em"><svg class="abs" style="left:0;top:0" width="12.5" height="12.5" viewBox="0 0 12.5 12.5"><path d="M2.3 5.2 H6.4 V3.2 L10.6 6.4 L6.4 9.6 V7.6 H2.3 Z" fill="#fff"/></svg></span></span> 点击跳转素材片单</span></div>
<div class="abs c m nw" style="left:653.1px;top:613.94px;width:139.1px;height:26.34px;line-height:25.84px;padding-top:1.7px;background:#eff5c9"><span class="lk"><span class="ew">&#8195;<span class="em"><svg class="abs" style="left:0;top:0" width="12.5" height="12.5" viewBox="0 0 12.5 12.5"><path d="M2.3 5.2 H6.4 V3.2 L10.6 6.4 L6.4 9.6 V7.6 H2.3 Z" fill="#fff"/></svg></span></span> 点击跳转素材片单</span></div>
<div class="abs c m nw" style="left:653.1px;top:640.28px;width:139.1px;height:26.34px;line-height:25.84px;padding-top:1.7px;background:#e8defa"><span class="lk"><span class="ew">&#8195;<span class="em"><svg class="abs" style="left:0;top:0" width="12.5" height="12.5" viewBox="0 0 12.5 12.5"><path d="M2.3 5.2 H6.4 V3.2 L10.6 6.4 L6.4 9.6 V7.6 H2.3 Z" fill="#fff"/></svg></span></span> 点击跳转素材片单</span></div>
<div class="abs c m nw" style="left:653.1px;top:666.62px;width:139.1px;height:26.34px;line-height:25.84px;padding-top:1.7px;background:#dedfe1"><span class="lk"><span class="ew">&#8195;<span class="em"><svg class="abs" style="left:0;top:0" width="12.5" height="12.5" viewBox="0 0 12.5 12.5"><path d="M2.3 5.2 H6.4 V3.2 L10.6 6.4 L6.4 9.6 V7.6 H2.3 Z" fill="#fff"/></svg></span></span> 点击跳转素材片单</span></div>
<div class="abs c m nw" style="left:653.1px;top:692.96px;width:139.1px;height:26.34px;line-height:25.84px;padding-top:1.7px;background:#f9dcef"><span class="lk"><span class="ew">&#8195;<span class="em"><svg class="abs" style="left:0;top:0" width="12.5" height="12.5" viewBox="0 0 12.5 12.5"><path d="M2.3 5.2 H6.4 V3.2 L10.6 6.4 L6.4 9.6 V7.6 H2.3 Z" fill="#fff"/></svg></span></span> 点击跳转素材片单</span></div>
<div class="abs c m nw" style="left:653.1px;top:719.3px;width:139.1px;height:79.02px;line-height:78.52px;padding-top:1.7px;background:#f3d56b"><span class="lk"><span class="ew">&#8195;<span class="em"><svg class="abs" style="left:0;top:0" width="12.5" height="12.5" viewBox="0 0 12.5 12.5"><path d="M2.3 5.2 H6.4 V3.2 L10.6 6.4 L6.4 9.6 V7.6 H2.3 Z" fill="#fff"/></svg></span></span> 点击跳转素材片单</span></div>
<div class="abs c m nw" style="left:653.1px;top:798.32px;width:139.1px;height:26.34px;line-height:25.84px;padding-top:1.7px;background:#dedfe1"><span class="lk"><span class="ew">&#8195;<span class="em"><svg class="abs" style="left:0;top:0" width="12.5" height="12.5" viewBox="0 0 12.5 12.5"><path d="M2.3 5.2 H6.4 V3.2 L10.6 6.4 L6.4 9.6 V7.6 H2.3 Z" fill="#fff"/></svg></span></span> 点击跳转素材片单</span></div>
<div class="abs c m nw" style="left:653.1px;top:824.66px;width:139.1px;height:52.68px;line-height:52.18px;padding-top:1.7px;background:#8ed5f6"><span class="lk"><span class="ew">&#8195;<span class="em"><svg class="abs" style="left:0;top:0" width="12.5" height="12.5" viewBox="0 0 12.5 12.5"><path d="M2.3 5.2 H6.4 V3.2 L10.6 6.4 L6.4 9.6 V7.6 H2.3 Z" fill="#fff"/></svg></span></span> 点击跳转素材片单</span></div>
<div class="abs c m nw" style="left:653.1px;top:877.34px;width:139.1px;height:26.34px;line-height:25.84px;padding-top:1.7px;background:#dedfe1"><span class="lk"><span class="ew">&#8195;<span class="em"><svg class="abs" style="left:0;top:0" width="12.5" height="12.5" viewBox="0 0 12.5 12.5"><path d="M2.3 5.2 H6.4 V3.2 L10.6 6.4 L6.4 9.6 V7.6 H2.3 Z" fill="#fff"/></svg></span></span> 点击跳转素材片单</span></div>
<div class="abs c m nw" style="left:653.1px;top:903.68px;width:139.1px;height:26.34px;line-height:25.84px;padding-top:1.7px;background:#dff2fd"><span class="lk"><span class="ew">&#8195;<span class="em"><svg class="abs" style="left:0;top:0" width="12.5" height="12.5" viewBox="0 0 12.5 12.5"><path d="M2.3 5.2 H6.4 V3.2 L10.6 6.4 L6.4 9.6 V7.6 H2.3 Z" fill="#fff"/></svg></span></span> 点击跳转素材片单</span></div>
<div class="abs c m nw" style="left:653.1px;top:930.02px;width:139.1px;height:26.34px;line-height:25.84px;padding-top:1.7px;background:#dff3d9"><span class="lk"><span class="ew">&#8195;<span class="em"><svg class="abs" style="left:0;top:0" width="12.5" height="12.5" viewBox="0 0 12.5 12.5"><path d="M2.3 5.2 H6.4 V3.2 L10.6 6.4 L6.4 9.6 V7.6 H2.3 Z" fill="#fff"/></svg></span></span> 点击跳转素材片单</span></div>
<div class="abs" style="left:0;top:297px;width:1280px;height:2px;background:linear-gradient(#bbbec3,#bbbec3 50%,#c9cbcf)"></div>
<div class="abs" style="left:0;top:184px;width:1046.7px;height:1.6px;background:#4f78f2"></div>
<div class="abs" style="left:38px;top:184px;width:1010px;height:88px;border:2px solid #4a75f2"></div>
<div class="abs" style="left:1045px;top:272px;width:2px;height:682px;background:linear-gradient(90deg,#c6d2fb 50%,#90a8f6 50%)"></div>
<div id="dd" class="abs"></div><div id="dhl" class="abs"></div><div id="dsb" class="abs"></div>
<div class="abs di nw" style="top:102.9px">【冰甜剧场 冰甜大剧场】</div>
<div class="abs di nw" style="top:128.2px">【郁郁剧场】</div>
<div class="abs di nw" style="top:153.5px">【顶好剧场】</div>
<div class="abs di nw" style="top:178.8px">【九霄剧场】</div>
<div class="abs di nw" style="top:204.1px">【碧海剧场】</div>
<div class="abs di nw" style="top:229.4px">【白词短剧】</div>
<div class="abs di nw" style="top:254.7px">【剧宝 冰海短剧 古言剧场】</div>
<div class="abs di nw" style="top:280px">【飞鹰剧场】</div>
<div class="abs di nw" style="top:305.3px">【画屏剧场 女神剧场】</div>
<div class="abs di nw" style="top:330.6px">【麦萌短剧】</div>
<div class="abs di nw" style="top:355.9px">【速播剧场】</div>
<div class="abs di nw" style="top:381.2px">【风行短剧】</div>
<div class="abs di nw" style="left:18px;top:406.5px"><svg width="14" height="15" viewBox="0 0 14 15" style="vertical-align:-2px"><path d="M7.2 0.6 C8 3 10.2 4.2 11.6 6.4 C13.2 9 12.4 12.4 9.8 13.8 C8.2 14.7 5.6 14.7 4 13.8 C1.4 12.3 0.8 9.2 2.2 6.8 C2.7 6 3.2 5.6 3.6 4.6 C4.2 5.4 4.5 6 4.7 6.8 C5.8 5.2 6.9 3.2 7.2 0.6 Z" fill="#f2641d"/><path d="M7 6.4 C7.8 8 9.6 9 9.6 11.2 C9.6 12.8 8.4 13.9 7 13.9 C5.5 13.9 4.3 12.8 4.3 11.2 C4.3 10.2 4.8 9.4 5.3 8.8 C5.6 9.3 5.8 9.6 6.1 9.9 C6.6 8.8 6.9 7.8 7 6.4 Z" fill="#fcc21b"/></svg>短剧任务每日充值榜单<svg width="14" height="15" viewBox="0 0 14 15" style="vertical-align:-2px"><path d="M7.2 0.6 C8 3 10.2 4.2 11.6 6.4 C13.2 9 12.4 12.4 9.8 13.8 C8.2 14.7 5.6 14.7 4 13.8 C1.4 12.3 0.8 9.2 2.2 6.8 C2.7 6 3.2 5.6 3.6 4.6 C4.2 5.4 4.5 6 4.7 6.8 C5.8 5.2 6.9 3.2 7.2 0.6 Z" fill="#f2641d"/><path d="M7 6.4 C7.8 8 9.6 9 9.6 11.2 C9.6 12.8 8.4 13.9 7 13.9 C5.5 13.9 4.3 12.8 4.3 11.2 C4.3 10.2 4.8 9.4 5.3 8.8 C5.6 9.3 5.8 9.6 6.1 9.9 C6.6 8.8 6.9 7.8 7 6.4 Z" fill="#fcc21b"/></svg></div>
<svg class="abs" style="left:0;top:0;pointer-events:none" width="1280" height="954" viewBox="0 0 1280 954" font-family="Liberation Sans, sans-serif" font-size="14.3" fill="#8c8c8c" fill-opacity=".175"><text transform="translate(70.7 145.3) rotate(-14.6)">Guest User 39431</text><text transform="translate(-59.2 16.3) rotate(-14.6)">Guest User 39431</text><text transform="translate(331.2 145.3) rotate(-14.6)">Guest User 39431</text><text transform="translate(201.3 16.3) rotate(-14.6)">Guest User 39431</text><text transform="translate(591.7 145.3) rotate(-14.6)">Guest User 39431</text><text transform="translate(461.8 16.3) rotate(-14.6)">Guest User 39431</text><text transform="translate(852.2 145.3) rotate(-14.6)">Guest User 39431</text><text transform="translate(722.3 16.3) rotate(-14.6)">Guest User 39431</text><text transform="translate(1112.7 145.3) rotate(-14.6)">Guest User 39431</text><text transform="translate(982.8 16.3) rotate(-14.6)">Guest User 39431</text><text transform="translate(1243.3 16.3) rotate(-14.6)">Guest User 39431</text><text transform="translate(70.7 405.3) rotate(-14.6)">Guest User 39431</text><text transform="translate(-59.2 276.3) rotate(-14.6)">Guest User 39431</text><text transform="translate(331.2 405.3) rotate(-14.6)">Guest User 39431</text><text transform="translate(201.3 276.3) rotate(-14.6)">Guest User 39431</text><text transform="translate(591.7 405.3) rotate(-14.6)">Guest User 39431</text><text transform="translate(461.8 276.3) rotate(-14.6)">Guest User 39431</text><text transform="translate(852.2 405.3) rotate(-14.6)">Guest User 39431</text><text transform="translate(722.3 276.3) rotate(-14.6)">Guest User 39431</text><text transform="translate(1112.7 405.3) rotate(-14.6)">Guest User 39431</text><text transform="translate(982.8 276.3) rotate(-14.6)">Guest User 39431</text><text transform="translate(1243.3 276.3) rotate(-14.6)">Guest User 39431</text><text transform="translate(70.7 665.3) rotate(-14.6)">Guest User 39431</text><text transform="translate(-59.2 536.3) rotate(-14.6)">Guest User 39431</text><text transform="translate(331.2 665.3) rotate(-14.6)">Guest User 39431</text><text transform="translate(201.3 536.3) rotate(-14.6)">Guest User 39431</text><text transform="translate(591.7 665.3) rotate(-14.6)">Guest User 39431</text><text transform="translate(461.8 536.3) rotate(-14.6)">Guest User 39431</text><text transform="translate(852.2 665.3) rotate(-14.6)">Guest User 39431</text><text transform="translate(722.3 536.3) rotate(-14.6)">Guest User 39431</text><text transform="translate(1112.7 665.3) rotate(-14.6)">Guest User 39431</text><text transform="translate(982.8 536.3) rotate(-14.6)">Guest User 39431</text><text transform="translate(1243.3 536.3) rotate(-14.6)">Guest User 39431</text><text transform="translate(70.7 925.3) rotate(-14.6)">Guest User 39431</text><text transform="translate(-59.2 796.3) rotate(-14.6)">Guest User 39431</text><text transform="translate(331.2 925.3) rotate(-14.6)">Guest User 39431</text><text transform="translate(201.3 796.3) rotate(-14.6)">Guest User 39431</text><text transform="translate(591.7 925.3) rotate(-14.6)">Guest User 39431</text><text transform="translate(461.8 796.3) rotate(-14.6)">Guest User 39431</text><text transform="translate(852.2 925.3) rotate(-14.6)">Guest User 39431</text><text transform="translate(722.3 796.3) rotate(-14.6)">Guest User 39431</text><text transform="translate(1112.7 925.3) rotate(-14.6)">Guest User 39431</text><text transform="translate(982.8 796.3) rotate(-14.6)">Guest User 39431</text><text transform="translate(1243.3 796.3) rotate(-14.6)">Guest User 39431</text></svg>
</div></body></html>
